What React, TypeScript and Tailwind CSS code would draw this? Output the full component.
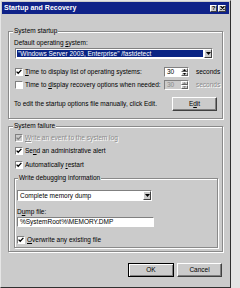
import React from 'react';

// Small Win2000-style widgets
const CheckBox = ({ checked, disabled }: { checked?: boolean; disabled?: boolean }) => (
  <span
    className={`w-[8px] h-[8px] shrink-0 flex items-center justify-center border border-t-[#808080] border-l-[#808080] border-r-white border-b-white ${
      disabled ? 'bg-[#cbcbcb]' : 'bg-white'
    }`}
  >
    {checked && (
      <svg viewBox="0 0 6 6" width="6" height="6">
        <path d="M0.6 2.6 L2.2 4.3 L5.4 0.9" fill="none" stroke={disabled ? '#808080' : '#000'} strokeWidth="1.3" />
      </svg>
    )}
  </span>
);

const DownArrow = () => (
  <svg viewBox="0 0 5 3" width="5" height="3">
    <path d="M0 0 H5 L2.5 3 Z" fill="#000" />
  </svg>
);

const ComboButton = () => (
  <span className="w-[8px] h-full shrink-0 bg-[#cbcbcb] flex items-center justify-center border border-t-white border-l-white border-r-[#404040] border-b-[#404040]">
    <DownArrow />
  </span>
);

const Spinner = ({ disabled }: { disabled?: boolean }) => (
  <div
    className={`w-[25px] h-[10px] flex border border-t-[#808080] border-l-[#808080] border-r-white border-b-white ${
      disabled ? 'bg-[#cbcbcb] text-[#8a8a8a]' : 'bg-white'
    }`}
  >
    <span className="flex-1 pl-[2px] leading-[8px]">30</span>
    <span className="w-[7px] flex flex-col">
      <span className="flex-1 bg-[#cbcbcb] border border-t-white border-l-white border-r-[#606060] border-b-[#606060] flex items-center justify-center">
        <svg viewBox="0 0 3 2" width="3" height="2">
          <path d="M0 2 H3 L1.5 0 Z" fill={disabled ? '#8a8a8a' : '#000'} />
        </svg>
      </span>
      <span className="flex-1 bg-[#cbcbcb] border border-t-white border-l-white border-r-[#606060] border-b-[#606060] flex items-center justify-center">
        <svg viewBox="0 0 3 2" width="3" height="2">
          <path d="M0 0 H3 L1.5 2 Z" fill={disabled ? '#8a8a8a' : '#000'} />
        </svg>
      </span>
    </span>
  </div>
);

const Button = ({ children, isDefault }: { children: React.ReactNode; isDefault?: boolean }) => (
  <button
    className={`w-full h-[14px] flex items-center justify-center bg-[#cbcbcb] leading-[8px] ${
      isDefault
        ? 'border border-black shadow-[inset_1px_1px_0_#fff,inset_-1px_-1px_0_#808080]'
        : 'border border-t-white border-l-white border-r-[#404040] border-b-[#404040] shadow-[inset_-1px_-1px_0_#808080]'
    }`}
  >
    {children}
  </button>
);

const U = ({ children }: { children: React.ReactNode }) => <span className="underline underline-offset-1">{children}</span>;

export default function App() {
  return (
    <div className="w-[240px] h-[288px] bg-[#e4e4e4] font-['Liberation_Sans',Arial,sans-serif] text-[6.5px] text-black">
      <div className="w-[231px] h-[288px] bg-[#cbcbcb] p-[1px] border border-t-[#e6e6e6] border-l-[#e6e6e6] border-r-[#303030] border-b-[#303030] flex flex-col">
        {/* Title bar */}
        <div className="h-[12px] bg-[#0f2288] flex items-center justify-between pl-[2px] pr-[3px]">
          <span className="text-white font-bold text-[7px] leading-[12px]">Startup and Recovery</span>
          <div className="flex gap-[1px]">
            <span className="w-[7px] h-[7px] bg-[#cbcbcb] border border-t-white border-l-white border-r-[#404040] border-b-[#404040] flex items-center justify-center text-[6px] font-bold leading-none">?</span>
            <span className="w-[8px] h-[7px] bg-[#cbcbcb] border border-t-white border-l-white border-r-[#404040] border-b-[#404040] flex items-center justify-center">
              <svg viewBox="0 0 5 4" width="5" height="4">
                <path d="M0.5 0 L4.5 4 M4.5 0 L0.5 4" stroke="#000" strokeWidth="1.1" />
              </svg>
            </span>
          </div>
        </div>

        <div className="px-[6px] flex flex-col">
          {/* System startup */}
          <fieldset className="mt-[13px] border border-[#8a8a8a] shadow-[inset_1px_1px_0_#fff,1px_1px_0_#fff]">
            <legend className="ml-[4px] px-[1px] leading-[8px] bg-[#cbcbcb]">System startup</legend>
            <div className="pl-[5px] pt-[4px] pb-[7px] flex flex-col">
              <span className="leading-[8px]">
                Default operating <U>s</U>ystem:
              </span>
              <div className="mt-[1px] ml-[1px] w-[198px] h-[11px] flex bg-white border border-t-[#808080] border-l-[#808080] border-r-white border-b-white">
                <span className="flex-1 m-[1px] bg-[#0a2484] text-white leading-[7px] pl-[1px] whitespace-nowrap overflow-hidden">
                  "Windows Server 2003, Enterprise" /fastdetect
                </span>
                <ComboButton />
              </div>
              <div className="mt-[8px] h-[10px] flex items-center">
                <span className="ml-[1px]">
                  <CheckBox checked />
                </span>
                <span className="ml-[2px] flex-1 whitespace-nowrap leading-[8px]">
                  <U>T</U>ime to display list of operating systems:
                </span>
                <Spinner />
                <span className="ml-[7px] w-[26px] leading-[8px]">seconds</span>
              </div>
              <div className="mt-[3px] h-[10px] flex items-center">
                <span className="ml-[1px]">
                  <CheckBox />
                </span>
                <span className="ml-[2px] flex-1 whitespace-nowrap leading-[8px]">
                  Time to <U>d</U>isplay recovery options when needed:
                </span>
                <Spinner disabled />
                <span className="ml-[7px] w-[26px] leading-[8px] text-[#8a8a8a] [text-shadow:1px_1px_0_#fff]">seconds</span>
              </div>
              <div className="mt-[7px] h-[14px] flex items-center justify-between pr-[5px]">
                <span className="leading-[8px] whitespace-nowrap">To edit the startup options file manually, click Edit.</span>
                <span className="w-[45px]">
                  <Button>
                    <span>
                      E<U>d</U>it
                    </span>
                  </Button>
                </span>
              </div>
            </div>
          </fieldset>

          {/* System failure */}
          <fieldset className="mt-[3px] border border-[#8a8a8a] shadow-[inset_1px_1px_0_#fff,1px_1px_0_#fff]">
            <legend className="ml-[4px] px-[1px] leading-[8px] bg-[#cbcbcb]">System failure</legend>
            <div className="pl-[5px] pt-[4px] pb-[3px] flex flex-col">
              <div className="h-[8px] flex items-center">
                <span className="ml-[1px]">
                  <CheckBox checked disabled />
                </span>
                <span className="ml-[2px] leading-[8px] text-[#8a8a8a] [text-shadow:1px_1px_0_#fff]">
                  <U>W</U>rite an event to the system log
                </span>
              </div>
              <div className="mt-[5px] h-[8px] flex items-center">
                <span className="ml-[1px]">
                  <CheckBox checked />
                </span>
                <span className="ml-[2px] leading-[8px]">
                  Se<U>n</U>d an administrative alert
                </span>
              </div>
              <div className="mt-[6px] h-[8px] flex items-center">
                <span className="ml-[1px]">
                  <CheckBox checked />
                </span>
                <span className="ml-[2px] leading-[8px]">
                  Automatically <U>r</U>estart
                </span>
              </div>

              {/* Write debugging information */}
              <fieldset className="mt-[5px] mr-[4px] border border-[#8a8a8a] shadow-[inset_1px_1px_0_#fff,1px_1px_0_#fff]">
                <legend className="ml-[3px] px-[1px] leading-[8px] bg-[#cbcbcb]">Write debugging information</legend>
                <div className="pl-[2px] pt-[8px] pb-[3px] flex flex-col">
                  <div className="w-[135px] h-[11px] flex bg-white border border-t-[#808080] border-l-[#808080] border-r-white border-b-white">
                    <span className="flex-1 pl-[2px] leading-[9px] whitespace-nowrap">Complete memory dump</span>
                    <ComboButton />
                  </div>
                  <span className="mt-[7px] leading-[8px]">
                    D<U>u</U>mp file:
                  </span>
                  <div className="mt-[1px] w-[137px] h-[10px] bg-white border border-t-[#808080] border-l-[#808080] border-r-white border-b-white pl-[2px] leading-[8px]">
                    %SystemRoot%\MEMORY.DMP
                  </div>
                  <div className="mt-[9px] h-[8px] flex items-center">
                    <CheckBox checked />
                    <span className="ml-[2px] leading-[8px]">
                      <U>O</U>verwrite any existing file
                    </span>
                  </div>
                </div>
              </fieldset>
            </div>
          </fieldset>

          {/* Dialog buttons */}
          <div className="mt-[11px] mr-[1px] flex justify-end gap-[3px]">
            <span className="w-[46px]">
              <Button isDefault>
                <span>OK</span>
              </Button>
            </span>
            <span className="w-[45px]">
              <Button>
                <span>Cancel</span>
              </Button>
            </span>
          </div>
        </div>
      </div>
    </div>
  );
}
